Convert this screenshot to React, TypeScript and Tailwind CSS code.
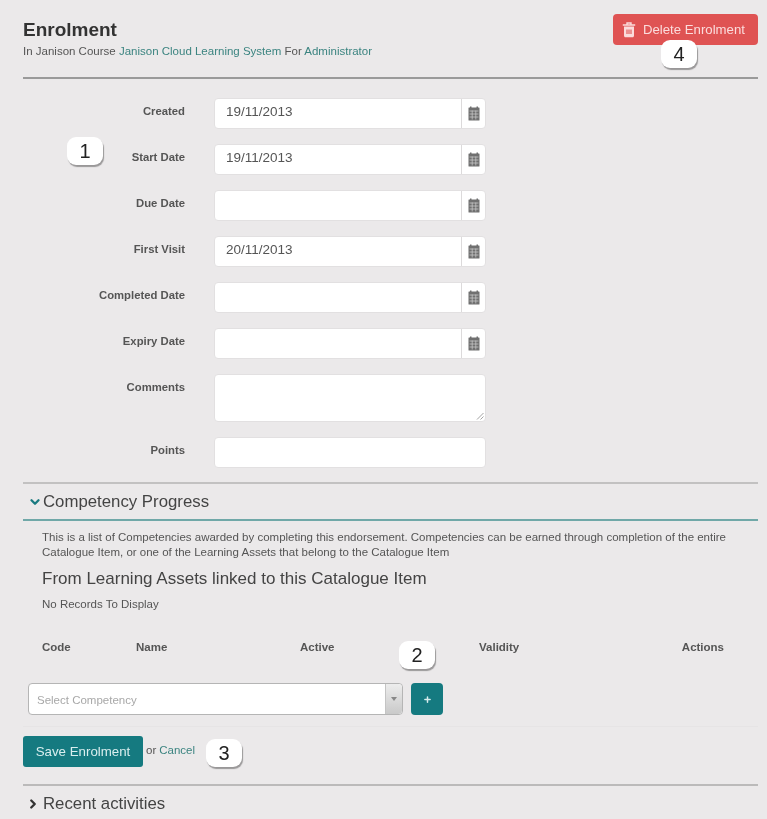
import { ChevronDown, ChevronRight, Plus } from "lucide-react"

const CalendarIcon = () => (
    <svg width="12" height="15" viewBox="0 0 12 15" className="text-[#707070]">
        <rect x="2" y="0.5" width="1.5" height="2" fill="currentColor" />
        <rect x="8.5" y="0.5" width="1.5" height="2" fill="currentColor" />
        <rect x="0.5" y="1.5" width="11" height="13" rx="0.5" fill="currentColor" />
        <path d="M1.5 5h9M1.5 8h9M1.5 11h9M4.2 4.5v9M7.8 4.5v9" stroke="#d0d0d0" strokeWidth="0.7" />
    </svg>
)

const TrashIcon = () => (
    <svg width="14" height="16" viewBox="0 0 14 16" className="text-[#fbdcdc]">
        <path d="M5 2.2V1h4v1.2M0.8 3h12.4" stroke="currentColor" strokeWidth="1.4" fill="none" />
        <path d="M2 4.5h10v9.3c0 .9-.6 1.5-1.5 1.5h-7C2.6 15.3 2 14.7 2 13.8z" fill="currentColor" />
        <path d="M4 7.5h6v4.5H4z" fill="#df5353" opacity="0.55" />
    </svg>
)

const Badge = ({ n, className }: { n: number; className: string }) => (
    <div
        className={`absolute flex h-[28px] w-[36px] items-center justify-center rounded-[9px] bg-white text-[20px] leading-none text-[#222] shadow-[1px_2px_1px_rgba(0,0,0,0.35)] ${className}`}
    >
        {n}
    </div>
)

const DateRow = ({ label, value }: { label: string; value?: string }) => (
    <div className="flex">
        <label className="w-[162px] pt-[6px] text-right text-[11.3px] leading-[14px] font-bold text-[#555]">{label}</label>
        <div className="ml-[29px] flex h-[31px] w-[272px] rounded-[4px] border border-[#e2e0e1] bg-white">
            <div className="flex-1 pl-[11px] pt-[4px] text-[13.5px] leading-[18px] text-[#555]">{value}</div>
            <div className="flex w-[24px] items-center justify-center border-l border-[#dcdadb]">
                <CalendarIcon />
            </div>
        </div>
    </div>
)

const dates = [
    { label: "Created", value: "19/11/2013" },
    { label: "Start Date", value: "19/11/2013" },
    { label: "Due Date" },
    { label: "First Visit", value: "20/11/2013" },
    { label: "Completed Date" },
    { label: "Expiry Date" },
]

export default function App() {
    return (
        <div className="relative h-[819px] w-[767px] overflow-hidden bg-[#ebe9ea] pl-[23px] pr-[9px] font-['Liberation_Sans',Arial,sans-serif] text-[#555] blur-[0.35px]">
            {/* Header */}
            <div className="flex h-[79px] items-start justify-between border-b-2 border-[#9a9a9a]">
                <div>
                    <h1 className="mt-[19px] text-[19px] leading-[22px] font-bold text-[#333]">Enrolment</h1>
                    <p className="mt-[3px] text-[11.5px] leading-[14px] text-[#555]">
                        In Janison Course <a className="text-[#3b8480]">Janison Cloud Learning System</a> For{" "}
                        <a className="text-[#3b8480]">Administrator</a>
                    </p>
                </div>
                <button className="mt-[14px] flex h-[31px] w-[145px] items-center rounded-[4px] bg-[#df5353] pl-[9px] text-[13.2px] text-[#fbdcdc]">
                    <TrashIcon />
                    <span className="ml-[7px]">Delete Enrolment</span>
                </button>
            </div>

            {/* Form */}
            <div className="mt-[19px] flex flex-col gap-[15px]">
                {dates.map(d => (
                    <DateRow key={d.label} label={d.label} value={d.value} />
                ))}
                <div className="flex">
                    <label className="w-[162px] pt-[6px] text-right text-[11.3px] leading-[14px] font-bold text-[#555]">Comments</label>
                    <div className="relative ml-[29px] h-[48px] w-[272px] rounded-[4px] border border-[#e2e0e1] bg-white">
                        <svg width="8" height="8" viewBox="0 0 8 8" className="absolute right-[1px] bottom-[1px]">
                            <path d="M1 7.5L7.5 1M4.5 7.5L7.5 4.5" stroke="#999" strokeWidth="0.9" />
                        </svg>
                    </div>
                </div>
                <div className="flex">
                    <label className="w-[162px] pt-[6px] text-right text-[11.3px] leading-[14px] font-bold text-[#555]">Points</label>
                    <div className="ml-[29px] h-[31px] w-[272px] rounded-[4px] border border-[#e2e0e1] bg-white" />
                </div>
            </div>

            {/* Competency Progress */}
            <div className="mt-[14px] border-t-2 border-[#c2c1c1]">
                <div className="flex h-[37px] items-center border-b-2 border-[#70a8a8] pl-[5px]">
                    <ChevronDown size={14} strokeWidth={4} className="text-[#1a7a80]" />
                    <span className="ml-[1px] text-[16.8px] text-[#444]">Competency Progress</span>
                </div>
                <div className="pl-[19px] pr-[34px]">
                    <p className="mt-[9px] -mr-[14px] text-[11.5px] leading-[15px] text-[#555]">
                        This is a list of Competencies awarded by completing this endorsement. Competencies can be earned through completion of the entire Catalogue Item, or one of the Learning Assets that belong to the Catalogue Item
                    </p>
                    <h2 className="mt-[8px] text-[17px] leading-[22px] text-[#444]">From Learning Assets linked to this Catalogue Item</h2>
                    <p className="mt-[7px] text-[11.5px] leading-[14px] text-[#555]">No Records To Display</p>
                    <div className="mt-[29px] flex h-[14px] text-[11.5px] leading-[14px] font-bold text-[#555]">
                        <span className="w-[94px]">Code</span>
                        <span className="w-[164px]">Name</span>
                        <span className="w-[179px]">Active</span>
                        <span className="flex-1">Validity</span>
                        <span>Actions</span>
                    </div>
                </div>
                <div className="mt-[29px] flex border-b border-[#e6e4e5] pb-[11px] pl-[5px]">
                    <div className="flex h-[32px] w-[375px] rounded-[4px] border border-[#b5b5b5] bg-white">
                        <div className="flex-1 pl-[8px] pt-[9px] text-[11.5px] leading-[14px] text-[#a8a8a8]">Select Competency</div>
                        <div className="flex w-[17px] items-center justify-center rounded-r-[4px] border-l border-[#c4c4c4] bg-gradient-to-b from-[#ededed] to-[#c9c9c9]">
                            <div className="h-0 w-0 border-x-[3px] border-t-[4px] border-x-transparent border-t-[#888]" />
                        </div>
                    </div>
                    <button className="ml-[8px] flex h-[32px] w-[32px] items-center justify-center rounded-[4px] bg-[#157a80] text-[#d7ecec]">
                        <Plus size={9} strokeWidth={4} />
                    </button>
                </div>
            </div>

            {/* Footer actions */}
            <div className="mt-[9px] flex items-center">
                <button className="h-[31px] w-[120px] rounded-[3px] bg-[#157a80] text-[13.3px] text-[#d9eeee]">Save Enrolment</button>
                <span className="ml-[3px] -translate-y-[1px] text-[11.5px] text-[#555]">or</span>
                <a className="ml-[3px] -translate-y-[1px] text-[11.5px] text-[#3b8480]">Cancel</a>
            </div>

            <div className="mt-[17px] flex h-[37px] items-center border-t-2 border-[#bbbaba] pl-[3px]">
                <ChevronRight size={14} strokeWidth={4} className="text-[#333]" />
                <span className="ml-[3px] text-[16.8px] text-[#444]">Recent activities</span>
            </div>

            {/* Numbered callouts */}
            <Badge n={1} className="left-[67px] top-[137px]" />
            <Badge n={2} className="left-[399px] top-[641px]" />
            <Badge n={3} className="left-[206px] top-[739px]" />
            <Badge n={4} className="left-[661px] top-[40px]" />
        </div>
    )
}
